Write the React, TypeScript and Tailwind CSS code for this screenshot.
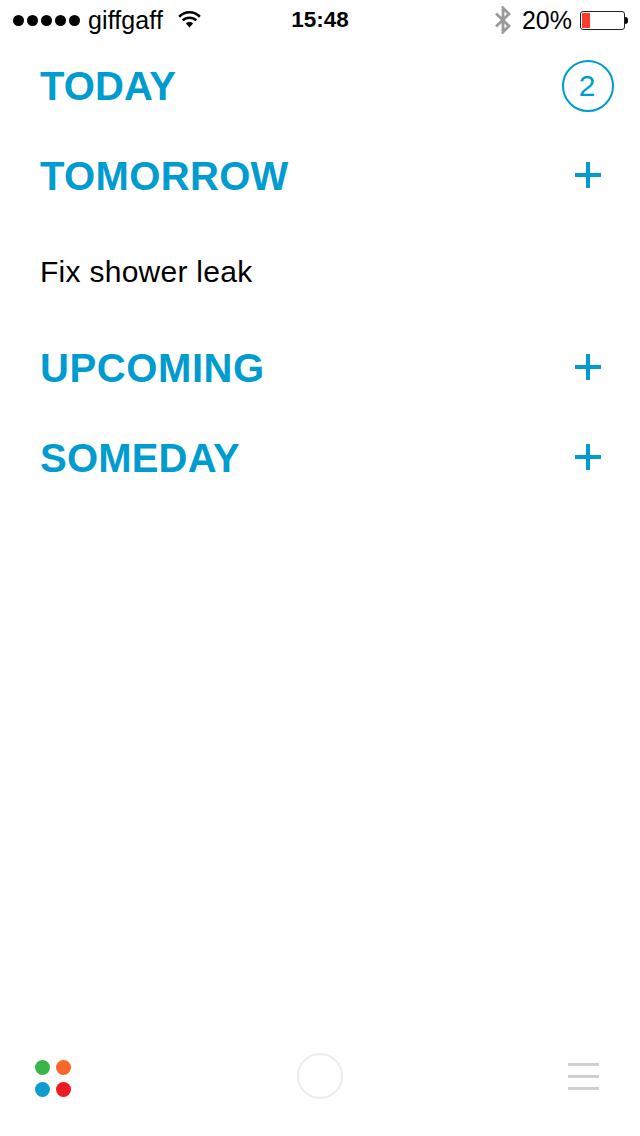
const SECTION = "mt-[2px] text-[40px] leading-none font-bold text-[#009ccf] font-['Liberation_Sans',Arial,sans-serif]";

function Plus() {
  return (
    <svg width="28" height="28" viewBox="0 0 28 28" className="mr-[38px]">
      <path d="M1 14h26M14 1v26" stroke="#009ccf" strokeWidth="4" />
    </svg>
  );
}

function StatusBar() {
  return (
    <div className="grid h-[40px] grid-cols-3 items-center font-['Liberation_Sans',Arial,sans-serif] text-[24px] text-black">
      <div className="flex items-center pl-[13px]">
        <div className="flex gap-[3px]">
          {[0, 1, 2, 3, 4].map((i) => (
            <span key={i} className="h-[11px] w-[11px] rounded-full bg-black" />
          ))}
        </div>
        <span className="ml-[8px] text-[25px] leading-none tracking-[0.1px]">giffgaff</span>
        <svg width="25" height="18" viewBox="0 0 26 20" className="mb-[3px] ml-[14px]">
          <path d="M1.5 7.5C8 1 18 1 24.5 7.5" fill="none" stroke="#000" strokeWidth="2.8" />
          <path d="M5.5 11.5C9.5 7.5 16.5 7.5 20.5 11.5" fill="none" stroke="#000" strokeWidth="2.8" />
          <path d="M9 15c2.2-2.2 5.8-2.2 8 0l-4 4.5z" fill="#000" />
        </svg>
      </div>
      <div className="text-center text-[22.5px] leading-none font-bold">15:48</div>
      <div className="flex items-center justify-end pr-[12px]">
        <svg width="18" height="28" viewBox="0 0 18 28">
          <path d="M2 7.5 15 20 9 26V2l6 6L2 20.5" fill="none" stroke="#9b9b9b" strokeWidth="2.8" />
        </svg>
        <span className="ml-[10px] text-[25px] leading-none">20%</span>
        <div className="ml-[8px] flex h-[19px] w-[45px] rounded-[3px] border border-[#222] p-[1px]">
          <div className="w-[8px] bg-[#ff3b30]" />
        </div>
        <div className="h-[7px] w-[3px] rounded-r-full bg-black" />
      </div>
    </div>
  );
}

function SectionRow({ title, tracking, action }: { title: string; tracking: string; action: React.ReactNode }) {
  return (
    <div className="flex h-[90px] items-center justify-between pl-10">
      <span className={`${SECTION} ${tracking}`}>{title}</span>
      {action}
    </div>
  );
}

export default function App() {
  return (
    <div className="flex h-[1136px] w-[640px] flex-col bg-white">
      <StatusBar />
      <SectionRow
        title="TODAY"
        tracking="tracking-[0.1px]"
        action={
          <div className="mt-[2px] mr-[26px] flex h-[52px] w-[52px] items-center justify-center rounded-full border-2 border-[#009ccf] font-['Liberation_Sans',Arial,sans-serif] text-[30px] leading-none text-[#009ccf]">
            <span className="mr-[2px]">2</span>
          </div>
        }
      />
      <SectionRow title="TOMORROW" tracking="tracking-[0.35px]" action={<Plus />} />
      <div className="flex h-[102px] items-center pt-[2px] pl-10 font-['Liberation_Sans',Arial,sans-serif] text-[30px] leading-none tracking-[0.27px] text-black">
        Fix shower leak
      </div>
      <SectionRow title="UPCOMING" tracking="tracking-[0.6px]" action={<Plus />} />
      <SectionRow title="SOMEDAY" tracking="tracking-[0.2px]" action={<Plus />} />

      <div className="mt-auto mb-[37px] flex items-center justify-between pr-[41px] pl-[35px]">
        <div className="mt-[4px] grid grid-cols-2 gap-x-[6px] gap-y-[7px]">
          <span className="h-[15px] w-[15px] rounded-full bg-[#39b54a]" />
          <span className="h-[15px] w-[15px] rounded-full bg-[#f7672a]" />
          <span className="h-[15px] w-[15px] rounded-full bg-[#0e9bd0]" />
          <span className="h-[15px] w-[15px] rounded-full bg-[#ed1c24]" />
        </div>
        <div className="h-[46px] w-[46px] rounded-full border-2 border-[#ececec]" />
        <div className="flex w-[31px] flex-col gap-[9px]">
          <span className="h-[3px] bg-[#d0d0d0]" />
          <span className="h-[3px] bg-[#d0d0d0]" />
          <span className="h-[3px] bg-[#d0d0d0]" />
        </div>
      </div>
    </div>
  );
}
